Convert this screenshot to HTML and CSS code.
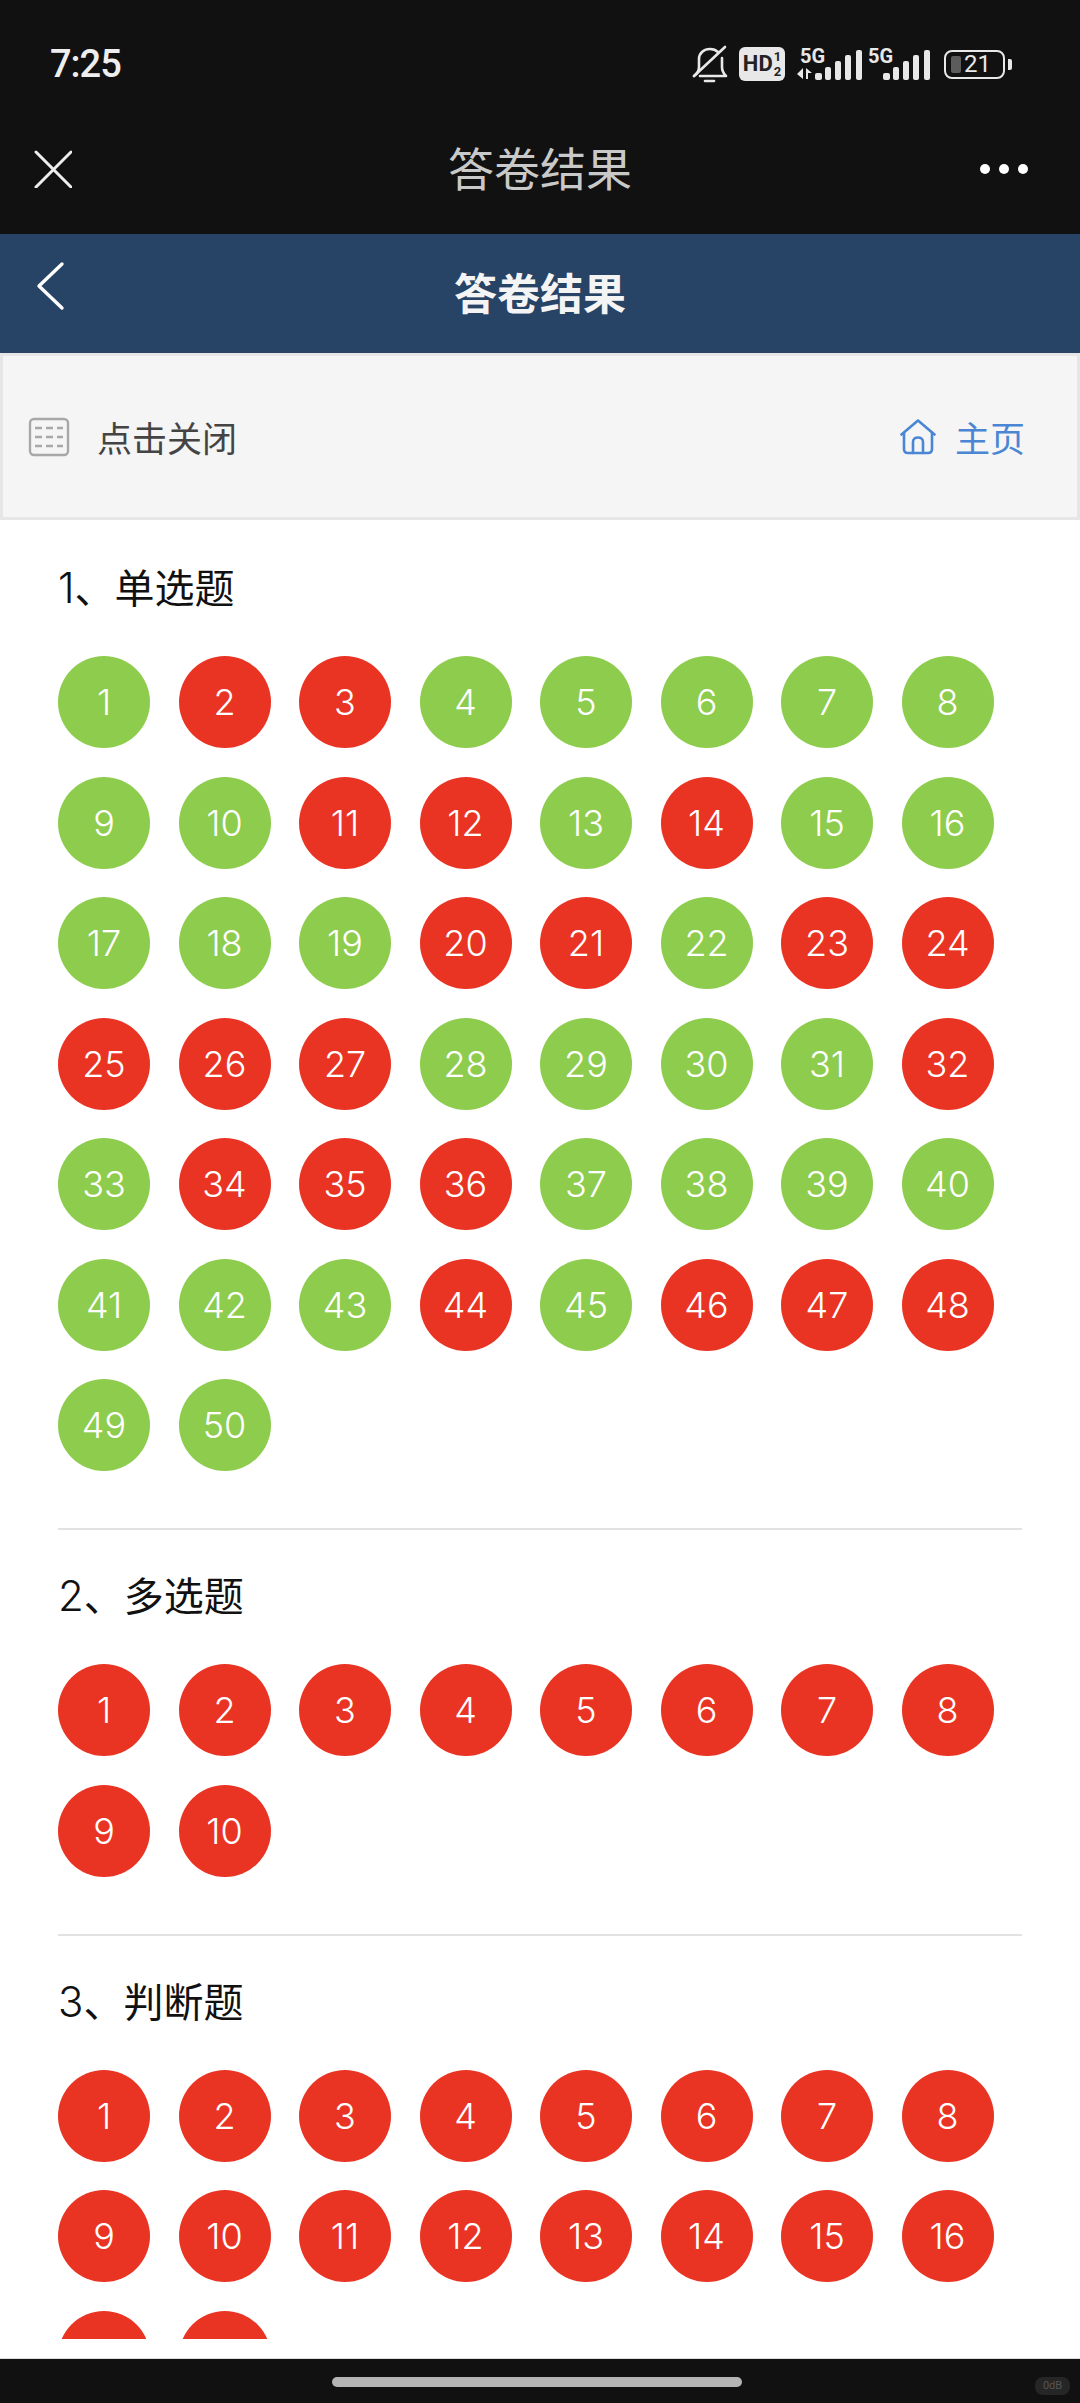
FILE: index.html
```html
<!DOCTYPE html>
<html>
<head>
  <meta charset="UTF-8" />
  <title>答卷结果</title>
  <link rel="stylesheet" href="styles.css">
</head>
<body>

  <!-- Phone status bar -->
  <div class="status-bar">
    <span class="time">7:25</span>
    <div class="status-icons">
      <svg class="ico-bell" width="36" height="38" viewBox="0 0 36 38" fill="none" stroke="#e8e8e8" stroke-width="2.6" stroke-linecap="round" stroke-linejoin="round">
        <path d="M2 31c3-2 5-5 5-9V14C7 8 12 4 18 4c3 0 6 1 8 3M30 13v9c0 4 2 7 4 9H8"/>
        <path d="M2 31L33 2"/>
        <path d="M13 36h9"/>
      </svg>
      <div class="hd-badge">HD<span class="hd-frac"><i>1</i><i>2</i></span></div>
      <div class="sim">
        <span class="net">5G</span>
        <svg class="arrows" width="16" height="11" viewBox="0 0 16 11" fill="#e8e8e8"><path d="M6 0v11L0 6zM9 0v11h2V5h4z"/></svg>
        <svg class="bars" width="47" height="30" viewBox="0 0 47 30" fill="#e8e8e8">
          <rect x="0" y="23" width="7" height="7" rx="2"/>
          <rect x="10" y="17" width="6" height="13" rx="2"/>
          <rect x="20" y="11" width="6" height="19" rx="2"/>
          <rect x="30" y="5" width="6" height="25" rx="2"/>
          <rect x="41" y="0" width="6" height="30" rx="2"/>
        </svg>
      </div>
      <div class="sim sim-b">
        <span class="net">5G</span>
        <svg class="bars" width="47" height="30" viewBox="0 0 47 30" fill="#e8e8e8">
          <rect x="0" y="23" width="7" height="7" rx="2"/>
          <rect x="10" y="17" width="6" height="13" rx="2"/>
          <rect x="20" y="11" width="6" height="19" rx="2"/>
          <rect x="30" y="5" width="6" height="25" rx="2"/>
          <rect x="41" y="0" width="6" height="30" rx="2"/>
        </svg>
      </div>
      <div class="battery">
        <div class="battery-box"><span class="battery-level"></span><span>21</span></div>
        <span class="battery-tip"></span>
      </div>
    </div>
  </div>

  <!-- WeChat style title bar -->
  <div class="title-bar">
    <svg width="38" height="38" viewBox="0 0 38 38" stroke="#eee" stroke-width="3" stroke-linecap="round"><path d="M2 2l35 35M37 2L2 37"/></svg>
    <span class="title-text">答卷结果</span>
    <div class="dots"><i></i><i></i><i></i></div>
  </div>

  <!-- Blue page header -->
  <div class="page-header">
    <svg class="back" width="30" height="50" viewBox="0 0 30 50" fill="none" stroke="#fff" stroke-width="3.4" stroke-linecap="round" stroke-linejoin="round"><path d="M27 3L4 25l23 22"/></svg>
    <span>答卷结果</span>
  </div>

  <!-- Close / home row -->
  <div class="tool-row">
    <div class="tool-left">
      <svg width="42" height="40" viewBox="0 0 42 40" fill="none" stroke="#a8a8a8" stroke-width="2.4">
        <rect x="2" y="2" width="38" height="36" rx="4"/>
        <path d="M7 11h7M18 11h7M29 11h6M7 20h7M18 20h7M29 20h6M7 29h7M18 29h7M29 29h6"/>
      </svg>
      <span>点击关闭</span>
    </div>
    <div class="tool-right">
      <svg width="36" height="36" viewBox="0 0 36 36" fill="none" stroke="#4a86d4" stroke-width="2.6" stroke-linecap="round" stroke-linejoin="round">
        <path d="M1.5 15.5L18 1.5l16.5 14"/>
        <path d="M4 14v16c0 2.5 1.5 4 4 4h20c2.5 0 4-1.5 4-4V14"/>
        <path d="M13 34V23c0-6 10-6 10 0v11"/>
      </svg>
      <span>主页</span>
    </div>
  </div>

  <div class="content-wrap">
    <div class="content" id="content"></div>
  </div>

  <!-- Phone nav bar -->
  <div class="nav-bar">
    <span class="home-pill"></span>
    <span class="watermark">0dB</span>
  </div>

  <script src="app.js"></script>
</body>
</html>
```

FILE: styles.css
```css
* {
  box-sizing: border-box;
}
html, body {
  margin: 0;
  height: 2403px;
  overflow: hidden;
}
body {
  display: flex;
  flex-direction: column;
  background: #fff;
  font-family: "Noto Sans CJK SC", "Noto Sans", sans-serif;
}

/* status bar */
.status-bar {
  height: 110px;
  background: #111112;
  padding: 18px 68px 0 50px;
  display: flex;
  justify-content: space-between;
  align-items: center;
  color: #eee;
  flex: none;
}
.time {
  font-family: Roboto, sans-serif;
  font-size: 38px;
  font-weight: 500;
  letter-spacing: -1px;
}
.status-icons {
  display: flex;
  align-items: center;
}
.ico-bell {
  margin-right: 11px;
}
.hd-badge {
  width: 46px;
  height: 34px;
  background: #e8e8e8;
  border-radius: 6px;
  color: #222;
  font: 700 22px/34px Roboto, sans-serif;
  display: flex;
  justify-content: center;
  margin-right: 12px;
}
.hd-frac {
  display: flex;
  flex-direction: column;
  font-size: 13px;
  line-height: 15px;
  padding-top: 2px;
  margin-left: 1px;
}
.hd-frac i {
  font-style: normal;
}
.sim {
  width: 65px;
  height: 34px;
  position: relative;
  margin-right: 6px;
}
.sim-b {
  width: 62px;
  margin-right: 14px;
}
.net {
  position: absolute;
  left: 3px;
  top: -1px;
  color: #e8e8e8;
  font: 700 20px/20px Roboto, sans-serif;
}
.sim-b .net {
  left: 0;
}
.arrows {
  position: absolute;
  left: 0;
  bottom: 2px;
}
.bars {
  position: absolute;
  right: 0;
  bottom: 1px;
}
.battery {
  display: flex;
  align-items: center;
  gap: 3px;
}
.battery-box {
  width: 61px;
  height: 29px;
  border: 2.5px solid #e8e8e8;
  border-radius: 8px;
  display: flex;
  align-items: center;
  padding-left: 5px;
  gap: 3px;
  font: 400 24px/24px Roboto, sans-serif;
  color: #e8e8e8;
}
.battery-level {
  width: 10px;
  height: 17px;
  background: #5c5c5c;
  border-radius: 2px;
}
.battery-tip {
  width: 4px;
  height: 11px;
  background: #e8e8e8;
  border-radius: 0 2px 2px 0;
}

/* title bar */
.title-bar {
  height: 124px;
  background: #111112;
  flex: none;
  display: flex;
  align-items: center;
  justify-content: space-between;
  padding: 0 52px 6px 34px;
  position: relative;
}
.title-text {
  position: absolute;
  left: 0;
  right: 0;
  top: 25px;
  text-align: center;
  color: #c9c9c9;
  font-size: 46px;
  line-height: 62px;
}
.dots {
  display: flex;
  gap: 9px;
}
.dots i {
  width: 10px;
  height: 10px;
  border-radius: 50%;
  background: #fff;
}

/* blue header */
.page-header {
  height: 119px;
  background: #274365;
  flex: none;
  color: #f4f4f4;
  font-size: 43px;
  font-weight: 700;
  display: flex;
  align-items: center;
  justify-content: center;
  padding-bottom: 5px;
  position: relative;
}
.back {
  position: absolute;
  left: 35px;
  top: 27px;
}

/* close / home row */
.tool-row {
  height: 167px;
  flex: none;
  background: #f5f5f5;
  border: 3px solid #e6e6e6;
  display: flex;
  align-items: center;
  justify-content: space-between;
  padding: 0 52px 0 25px;
  font-size: 35px;
}
.tool-left, .tool-right {
  display: flex;
  align-items: center;
}
.tool-left {
  color: #444;
  gap: 27px;
}
.tool-right {
  color: #4a86d4;
  gap: 19px;
}

/* result sections */
.content-wrap {
  flex: 1;
  padding-bottom: 19px;
  min-height: 0;
  border-bottom: 1px solid #ddd;
}
.content {
  height: 100%;
  overflow: hidden;
  padding: 2px 58px 0;
}
.section {
  border-bottom: 2px solid #e2e2e2;
  padding-bottom: 57px;
}
.section:last-child {
  border-bottom: 0;
}
.section-title {
  font-size: 40px;
  line-height: 58px;
  color: #111;
  padding-top: 35px;
  height: 134px;
  font-weight: 400;
  margin: 0;
}
.section-title .num {
  font-family: Inter, sans-serif;
  font-size: 42px;
  font-weight: 300;
}
.balls {
  display: grid;
  grid-template-columns: repeat(8, 92px);
  gap: 28.5px;
}
.ball {
  width: 92px;
  height: 92px;
  border-radius: 50%;
  color: #fff;
  font: 300 36px/92px Inter, sans-serif;
  text-align: center;
}
.ok {
  background: #8dcc4d;
}
.bad {
  background: #e93424;
}

/* nav bar */
.nav-bar {
  height: 44px;
  flex: none;
  background: #111112;
  display: flex;
  justify-content: center;
  position: relative;
  padding: 18px 6px 0 0;
}
.home-pill {
  width: 410px;
  height: 10px;
  border-radius: 5px;
  background: #b5b5b5;
}
.watermark {
  position: absolute;
  left: 1035px;
  top: 18px;
  width: 35px;
  height: 18px;
  border-radius: 8px;
  background: #262626;
  color: #555;
  font: 400 11px/18px Roboto, sans-serif;
  text-align: center;
}
```

FILE: app.js
```js
// 1 = right (green), 0 = wrong (red)
const singleChoice = "10011111" + "11001011" + "11100100" + "00011110" + "10001111" + "11101000" + "11";

// labels: how many balls show a number, the rest are cut by the scroll area
const sections = [
  { num: "1", title: "单选题", marks: singleChoice, labels: 50 },
  { num: "2", title: "多选题", marks: "0".repeat(10), labels: 10 },
  { num: "3", title: "判断题", marks: "0".repeat(18), labels: 16 }
];

const content = document.getElementById("content");

sections.forEach(sec => {
  const box = document.createElement("div");
  box.className = "section";

  const title = document.createElement("h3");
  title.className = "section-title";
  title.innerHTML = `<span class="num">${sec.num}</span>、${sec.title}`;
  box.appendChild(title);

  const balls = document.createElement("div");
  balls.className = "balls";
  Array.from(sec.marks).forEach((m, i) => {
    const ball = document.createElement("div");
    ball.className = "ball " + (m === "1" ? "ok" : "bad");
    if (i < sec.labels) ball.textContent = i + 1;
    balls.appendChild(ball);
  });
  box.appendChild(balls);
  content.appendChild(box);
});
```
